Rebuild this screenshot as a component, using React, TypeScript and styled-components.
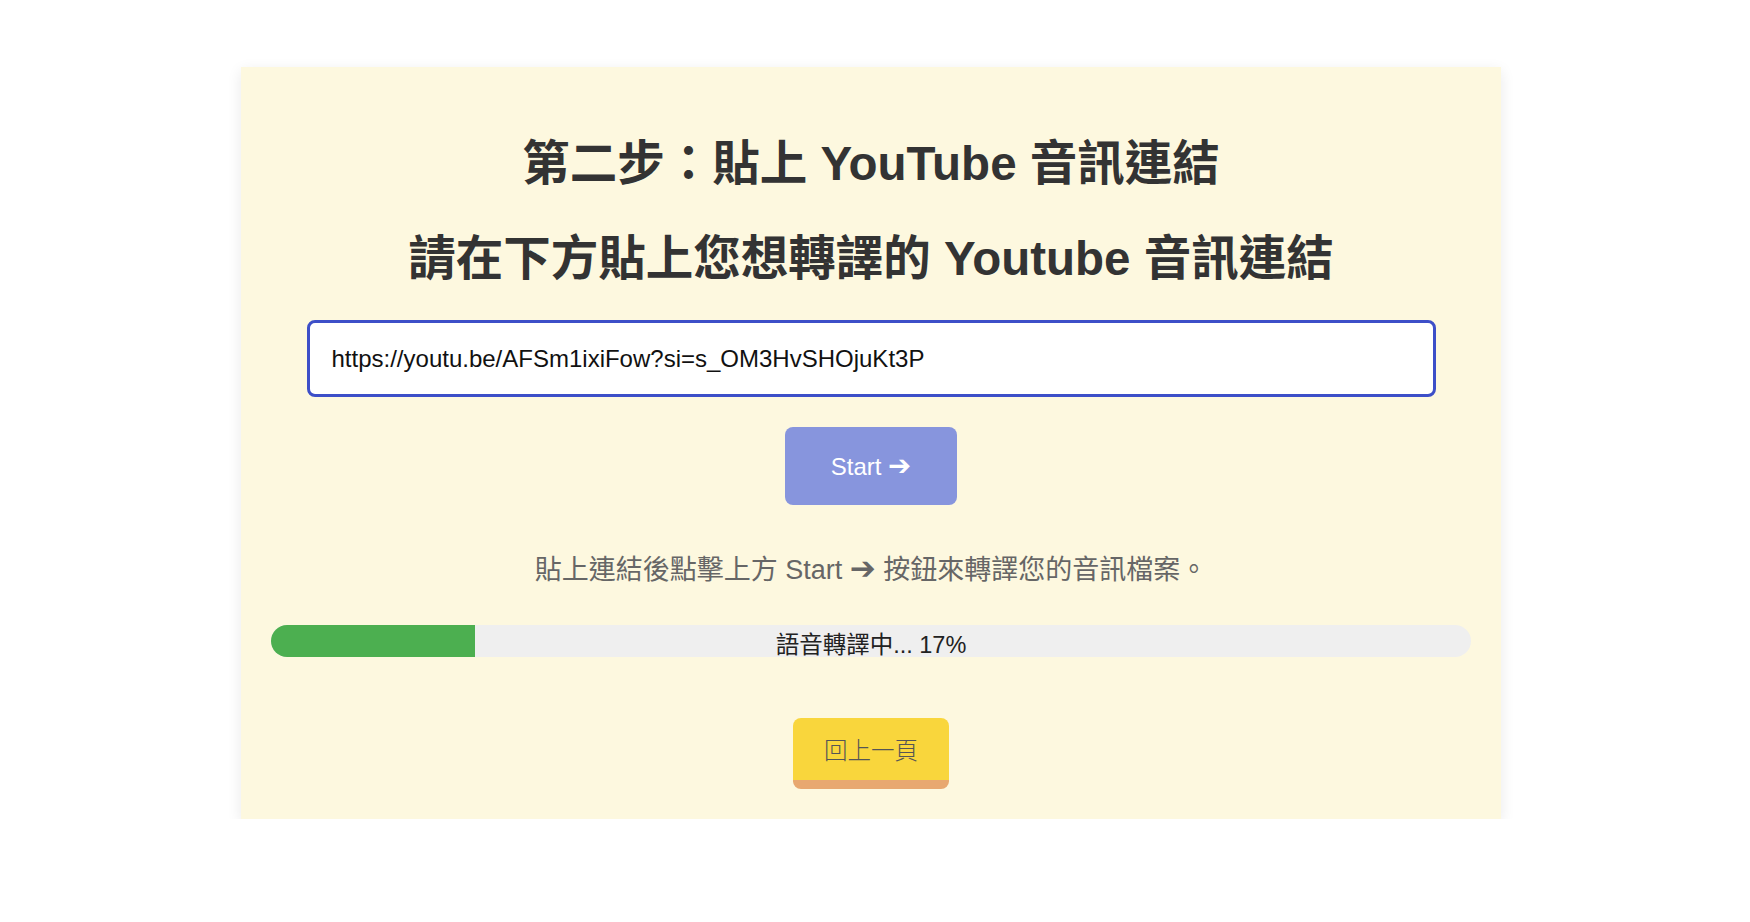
import React from "react";
import styled, { createGlobalStyle } from "styled-components";

const Global = createGlobalStyle`
  html, body { margin: 0; padding: 0; background: #ffffff; }
  body { font-family: "Liberation Sans", Arial, "Noto Sans CJK TC", sans-serif; }
  * { box-sizing: border-box; }
`;

const Page = styled.div`
  display: flex;
  justify-content: center;
  padding: 67px 8px 0 0;
`;

const Card = styled.main`
  width: 1260px;
  background: #fdf8df;
  box-shadow: 0 4px 14px rgba(0, 0, 0, 0.09);
  padding: 69px 30px 30px;
  display: flex;
  flex-direction: column;
  align-items: center;
`;

const Title = styled.h1<{ $gap: number }>`
  margin: 0 0 ${(p) => p.$gap}px;
  font-size: 47.5px;
  line-height: 56px;
  font-weight: 700;
  color: #333333;
  text-align: center;
  font-family: "Liberation Sans", Arial, "Noto Sans CJK TC", sans-serif;
`;

const UrlInput = styled.input`
  width: 1129px;
  height: 77px;
  border: 3px solid #3d4fc8;
  border-radius: 8px;
  background: #ffffff;
  padding: 0 22px;
  font-size: 24px;
  color: #111111;
  font-family: "Liberation Sans", Arial, sans-serif;
  outline: none;
  margin: 0 0 30px;
`;

const StartButton = styled.button`
  width: 172px;
  height: 78px;
  border: none;
  border-radius: 8px;
  background: #8795dd;
  color: #ffffff;
  font-size: 24px;
  font-family: "Liberation Sans", Arial, "DejaVu Sans", sans-serif;
  margin: 0 0 47px;
  cursor: not-allowed;
`;

const Arrow = styled.span`
  font-size: 1.15em;
  line-height: 1;
  font-family: "DejaVu Sans", sans-serif;
  font-weight: 700;
`;

const Hint = styled.p`
  margin: 0 0 37px;
  font-size: 27px;
  line-height: 36px;
  color: #666666;
  text-align: center;
  font-family: "Liberation Sans", Arial, "Noto Sans CJK TC", sans-serif;
`;

const Track = styled.div`
  position: relative;
  width: 100%;
  height: 32px;
  border-radius: 16px;
  background: #efefef;
  overflow: hidden;
  margin: 0 0 61px;
`;

const Fill = styled.div`
  height: 100%;
  background: #4caf50;
`;

const TrackLabel = styled.span`
  position: absolute;
  inset: 0;
  display: flex;
  align-items: center;
  justify-content: center;
  padding-top: 3px;
  font-size: 23.5px;
  color: #222222;
  font-family: "Liberation Sans", Arial, "Noto Sans CJK TC", sans-serif;
`;

const BackButton = styled.button`
  width: 156px;
  height: 71px;
  border: none;
  border-bottom: 9px solid #e8a870;
  border-radius: 8px;
  background: #f9d63c;
  color: #555555;
  font-size: 23.5px;
  font-family: "Noto Sans CJK TC", sans-serif;
  font-weight: 300;
  padding: 0;
  cursor: pointer;
`;

export default function App() {
  const progress = 17;
  return (
    <>
      <Global />
      <Page>
        <Card>
          <Title $gap={39}>第二步：貼上 YouTube 音訊連結</Title>
          <Title $gap={33}>請在下方貼上您想轉譯的 Youtube 音訊連結</Title>
          <UrlInput
            type="text"
            defaultValue="https://youtu.be/AFSm1ixiFow?si=s_OM3HvSHOjuKt3P"
          />
          <StartButton>
            Start <Arrow>➔</Arrow>
          </StartButton>
          <Hint>
            貼上連結後點擊上方 Start <Arrow>➔</Arrow> 按鈕來轉譯您的音訊檔案。
          </Hint>
          <Track>
            <Fill style={{ width: `${progress}%` }} />
            <TrackLabel>語音轉譯中... {progress}%</TrackLabel>
          </Track>
          <BackButton>回上一頁</BackButton>
        </Card>
      </Page>
    </>
  );
}
